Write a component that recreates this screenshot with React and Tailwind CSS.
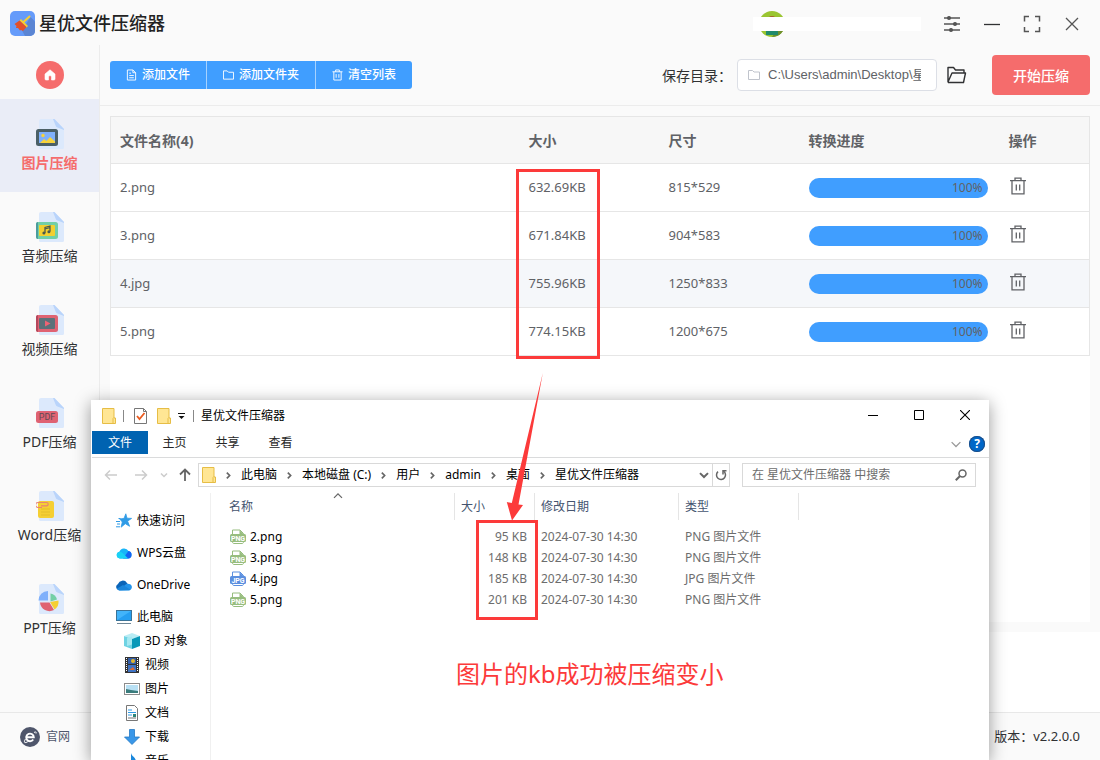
import React from "react";

const tools = [
  { label: "图片压缩", kind: "image" },
  { label: "音频压缩", kind: "audio" },
  { label: "视频压缩", kind: "video" },
  { label: "PDF压缩", kind: "pdf" },
  { label: "Word压缩", kind: "word" },
  { label: "PPT压缩", kind: "ppt" },
];

const files = [
  { name: "2.png", size: "632.69KB", dim: "815*529", progress: 100 },
  { name: "3.png", size: "671.84KB", dim: "904*583", progress: 100 },
  { name: "4.jpg", size: "755.96KB", dim: "1250*833", progress: 100 },
  { name: "5.png", size: "774.15KB", dim: "1200*675", progress: 100 },
];

const outputs = [
  { name: "2.png", size: "95 KB", type: "PNG 图片文件" },
  { name: "3.png", size: "148 KB", type: "PNG 图片文件" },
  { name: "4.jpg", size: "185 KB", type: "JPG 图片文件" },
  { name: "5.png", size: "201 KB", type: "PNG 图片文件" },
];

const crumbs = ["此电脑", "本地磁盘 (C:)", "用户", "admin", "桌面", "星优文件压缩器"];

function Logo() {
  return (
    <svg width="25" height="25" viewBox="0 0 25 25" aria-hidden="true">
      <rect width="25" height="25" rx="5" fill="#659bfa" />
      <path d="M20.500 6 25 10.500V20a5 5 0 0 1-5 5H15l-3-5.500z" fill="#5b85d3" />
      <path d="M19.500 5.500 13.500 11" stroke="#f5cf33" strokeWidth="2" strokeLinecap="round" />
      <path d="m11 8 7 7-1.500 1.500L9.500 9.500z" fill="#f5cf33" />
      <path d="M9.500 9.500 16.500 16 13 20l-2-1-1 .5-2-2.500-2 0 .5-2L4.500 13z" fill="#e2502b" />
    </svg>
  );
}

function ToolIcon({ kind }) {
  return (
    <svg width="28" height="30" viewBox="0 0 28 30" aria-hidden="true">
      <path d="M5 0h13L28 10v18.500a1.500 1.500 0 0 1-1.500 1.500h-22A1.500 1.500 0 0 1 3 28.500V2a2 2 0 0 1 2-2z" fill="#dce9fc" />
      <path d="M17 0h1.500L28 10v1l-6.500-2.500a3 3 0 0 1-2-2.200z" fill="#b9d4fb" />
      {kind === "image" && (
        <g>
          <rect x="0" y="10" width="22" height="17" rx="2.500" fill="#4b6067" />
          <rect x="3" y="13" width="16" height="11" fill="#7fb0fb" />
          <circle cx="7" cy="16.500" r="1.700" fill="#f7d33c" />
          <path d="m4 24 4-4 2.500 2 3.500-4 5 4.500V24z" fill="#f7d33c" />
        </g>
      )}
      {kind === "audio" && (
        <g>
          <rect x="0" y="10" width="22" height="17" rx="2.500" fill="#72cfa6" />
          <path d="M2 10v17a2 2 0 0 1-2-2V12a2 2 0 0 1 2-2z" fill="#4c9c9c" />
          <rect x="3" y="13" width="16" height="11" rx="1" fill="#f3cf2f" />
          <path d="M9 21v-5.500l5-1.500v5.500M9 17l5-1.500" stroke="#4b5a4d" strokeWidth="1.300" fill="none" />
          <circle cx="7.900" cy="21" r="1.500" fill="#4b5a4d" />
          <circle cx="12.900" cy="19.700" r="1.500" fill="#4b5a4d" />
        </g>
      )}
      {kind === "video" && (
        <g>
          <rect x="0" y="10" width="22" height="17" rx="2.500" fill="#df6272" />
          <path d="M2 10v17a2 2 0 0 1-2-2V12a2 2 0 0 1 2-2z" fill="#b5475c" />
          <rect x="3" y="13" width="16" height="11" rx="1" fill="#5b7079" />
          <path d="m9 15.500 5.500 3L9 21.500z" fill="#ee6374" />
        </g>
      )}
      {kind === "pdf" && (
        <g>
          <rect x="0" y="13" width="22" height="12" rx="2.500" fill="#df6272" />
          <text x="11" y="22.200" textAnchor="middle" fontSize="9" fontFamily="Roboto, sans-serif" fill="#5c4a52">PDF</text>
        </g>
      )}
      {kind === "word" && (
        <g>
          <rect x="2" y="10" width="16" height="17" rx="2" fill="#f5cf33" />
          <path d="M5 18h9M5 21h9M5 24h9" stroke="#e3bd2b" strokeWidth="1" />
          <path d="M6 16.500H2A2.300 2.300 0 0 1 2 11.500h8.500a1.600 1.600 0 0 1 0 3.300H5" fill="none" stroke="#e88372" strokeWidth="1.200" />
        </g>
      )}
      {kind === "ppt" && (
        <g>
          <path d="M12 7v9.500H2.500A9.500 9.500 0 0 1 12 7z" fill="#7fb0fb" />
          <path d="M14.500 9.500a8 8 0 0 1 6.500 6l-6.500 2z" fill="#72cfa6" />
          <path d="M22.500 16.500a9.500 9.500 0 0 1-4 9l-4.500-7.500z" fill="#f5cf33" />
          <path d="M4 18.500h9.500l4.500 7.500a9.500 9.500 0 0 1-14-7.500z" fill="#df6272" />
        </g>
      )}
    </svg>
  );
}

function TrashIcon() {
  return (
    <svg width="18" height="18" viewBox="0 0 18 18" fill="none" stroke="#606266" strokeWidth="1.300" aria-hidden="true">
      <path d="M1 3.600h16M6 3.400V1.100h6v2.300M3 3.600v13.300h12V3.600M7.300 7.500v6M10.700 7.500v6" />
    </svg>
  );
}

function Folder({ className = "" }) {
  return (
    <svg className={className} width="14" height="16" viewBox="0 0 14 16" aria-hidden="true">
      <path d="M.5.500h11.500v9.500h1.500v5.500H.5z" fill="#ffe694" stroke="#e6bd45" />
      <path d="M11 15.500v-5l1-1" fill="none" stroke="#e6bd45" />
    </svg>
  );
}

function FileIcon({ type }) {
  const color = type === "JPG" ? "#5b8fdf" : "#97bd7e";
  return (
    <svg width="16" height="16" viewBox="0 0 16 16" aria-hidden="true">
      <path d="M2.500 5V1h7.500l3.500 3.500V12.500c0 1.500-.5 2-1.500 2H4c-1 0-1.500-.5-1.500-2z" fill="#fff" stroke={color} />
      <path d="M9.500 1v4h4z" fill={color} />
      <rect x="0" y="5" width="16" height="8" rx="1.500" fill={color} />
      <text x="8" y="11.600" textAnchor="middle" fontSize="7" fontWeight="700" fontFamily="Roboto, sans-serif" fill="#fff">{type}</text>
    </svg>
  );
}

function Chevron({ className, d, size = 8, width = 1.5 }) {
  return (
    <svg className={className} width={size} height={size} viewBox="0 0 8 8" fill="none" stroke="currentColor" strokeWidth={width} aria-hidden="true">
      <path d={d} />
    </svg>
  );
}

function Sidebar() {
  return (
    <nav className="flex w-[100px] shrink-0 flex-col items-stretch border-r border-[#ececec] pt-4">
      <button aria-label="首页" className="mb-2.5 flex size-7 items-center justify-center self-center rounded-full bg-[#f56c6c]">
        <svg width="12" height="12" viewBox="0 0 12 12" aria-hidden="true">
          <path d="M6 .8 11 5v5a1 1 0 0 1-1 1H7.500V8a1.500 1.500 0 0 0-3 0v3H2a1 1 0 0 1-1-1V5z" fill="#fff" stroke="#fff" strokeWidth=".6" strokeLinejoin="round" />
        </svg>
      </button>
      {tools.map((t, i) => (
        <button
          key={t.label}
          className={
            "flex h-[93px] flex-col items-center gap-1 pt-5 text-[14px] leading-5 " +
            (i === 0 ? "bg-[#eaedf7] font-bold text-[#f56c6c]" : "text-[#303133]")
          }
        >
          <ToolIcon kind={t.kind} />
          {t.label}
        </button>
      ))}
    </nav>
  );
}

function TitleBar() {
  return (
    <header className="flex h-[45px] shrink-0 items-center pt-0.5 pl-2.5 pr-[19px]">
      <Logo />
      <h1 className="ml-1 text-[18px] font-medium text-[#222]">星优文件压缩器</h1>
      <div className="relative ml-auto flex h-[26px] w-[168px] items-center">
        <svg className="ml-1.5" width="26" height="26" viewBox="0 0 26 26" aria-hidden="true">
          <clipPath id="avatar"><circle cx="13" cy="13" r="13" /></clipPath>
          <g clipPath="url(#avatar)">
            <rect width="26" height="26" fill="#9ac531" />
            <path d="M19 17 26 21v5H13z" fill="#6f8f2d" />
            <circle cx="13" cy="10" r="5" fill="#a8602c" />
            <path d="M7 20h12v4H7z" fill="#208a6a" />
          </g>
        </svg>
        <div className="absolute inset-x-0 top-1.5 h-3.5 bg-white" />
      </div>
      <div className="ml-[22px] flex items-center gap-[22px] text-[#555]">
        <button aria-label="设置">
          <svg width="18" height="18" viewBox="0 0 18 18" stroke="currentColor" strokeWidth="1.300" fill="currentColor" aria-hidden="true">
            <path d="M1 3h16M1 9h16M1 15h16" />
            <circle cx="6" cy="3" r="1.400" /><circle cx="12" cy="9" r="1.400" /><circle cx="8" cy="15" r="1.400" />
          </svg>
        </button>
        <button aria-label="最小化">
          <svg width="18" height="18" viewBox="0 0 18 18" stroke="#303133" strokeWidth="1.300" aria-hidden="true"><path d="M1 9.500h16" /></svg>
        </button>
        <button aria-label="全屏">
          <svg width="18" height="18" viewBox="0 0 18 18" stroke="currentColor" strokeWidth="1.500" fill="none" aria-hidden="true">
            <path d="M1.500 6.500V1.500h4.500M12 1.500h4.500v5M16.500 12v4.500H12M6 16.500H1.500V12" />
          </svg>
        </button>
        <button aria-label="关闭">
          <svg width="18" height="18" viewBox="0 0 18 18" stroke="currentColor" strokeWidth="1.300" aria-hidden="true"><path d="m3 3 12 12M15 3 3 15" /></svg>
        </button>
      </div>
    </header>
  );
}

function Toolbar() {
  const btn = "flex h-7 items-center gap-[5px] px-4 text-[12px] font-medium text-white";
  return (
    <div className="flex h-[61px] shrink-0 items-center border-b border-[#ececec] px-2.5">
      <div className="flex divide-x divide-[#a6d2ff] rounded-[3px] bg-[#409eff]">
        <button className={btn}>
          <svg width="11" height="12" viewBox="0 0 12 12" fill="none" stroke="currentColor" aria-hidden="true">
            <path d="M1.500.500h6l3 3v8h-9zM7.500.500v3h3M3.500 4h2M3.500 6.500h5M3.500 9h5" />
          </svg>
          添加文件
        </button>
        <button className={btn}>
          <svg width="11" height="12" viewBox="0 0 12 12" fill="none" stroke="currentColor" aria-hidden="true">
            <path d="M.5 1.500h4l1.500 1.500h5.500v7.500H.500z" />
          </svg>
          添加文件夹
        </button>
        <button className={btn}>
          <svg width="11" height="12" viewBox="0 0 12 12" fill="none" stroke="currentColor" aria-hidden="true">
            <path d="M.5 2.500h11M4 2.500v-2h4v2M2 2.500v9h8v-9M4.500 5v4M7.500 5v4" />
          </svg>
          清空列表
        </button>
      </div>
      <label htmlFor="outdir" className="ml-auto text-[14px] text-[#303133]">保存目录：</label>
      <div className="ml-[5px] flex h-8 w-[200px] items-center gap-2 rounded border border-[#dcdfe6] bg-white pr-[15px] pl-2.5">
        <svg className="shrink-0" width="12" height="12" viewBox="0 0 12 12" fill="none" stroke="#c0c4cc" aria-hidden="true">
          <path d="M.5 1.500h4l1.500 1.500h5.500v7.500H.500z" />
        </svg>
        <input
          id="outdir"
          className="w-full min-w-0 bg-transparent font-['Liberation_Sans','Noto_Sans_CJK_SC',sans-serif] text-[13px] text-[#606266] outline-none"
          defaultValue="C:\Users\admin\Desktop\星优文件压缩器"
        />
      </div>
      <button aria-label="打开目录" className="ml-2.5">
        <svg width="20" height="18" viewBox="0 0 20 18" fill="none" stroke="#303133" strokeWidth="1.400" strokeLinejoin="round" aria-hidden="true">
          <path d="M1 16.500V1.500h5.500l2 2.500H17v3M1 16.500h15.500L18.500 7H5L1 16" />
        </svg>
      </button>
      <button className="ml-[25px] h-10 w-[98px] rounded bg-[#f56c6c] text-[14px] font-medium text-white">开始压缩</button>
    </div>
  );
}

function FileTable() {
  return (
    <table className="w-full table-fixed border-collapse border border-[#e6e6e6] text-left text-[#606266]">
      <colgroup>
        <col /><col className="w-[140px]" /><col className="w-[140px]" /><col className="w-[200px]" /><col className="w-[90px]" />
      </colgroup>
      <thead>
        <tr className="h-[47px] border-b border-[#e6e6e6] bg-[#f7f7f7] text-[14px]">
          {["文件名称(4)", "大小", "尺寸", "转换进度", "操作"].map((h) => (
            <th key={h} className="px-[9px] font-bold">{h}</th>
          ))}
        </tr>
      </thead>
      <tbody className="text-[13px]">
        {files.map((f, i) => (
          <tr key={f.name} className={"h-12 border-b border-[#e6e6e6] " + (i === 2 ? "bg-[#f5f7fa]" : "bg-white")}>
            <td className="px-[9px]">{f.name}</td>
            <td className="px-[9px]">{f.size}</td>
            <td className="px-[9px]">{f.dim}</td>
            <td className="pr-3 pl-[9px]">
              <div role="progressbar" aria-valuenow={f.progress} className="rounded-full bg-[#ebeef5]">
                <div className="h-5 rounded-full bg-[#409eff] pr-[5px] text-right text-[12px] leading-5" style={{ width: `${f.progress}%` }}>
                  {f.progress}%
                </div>
              </div>
            </td>
            <td className="px-[9px]">
              <button aria-label={`删除 ${f.name}`} className="mb-1 block"><TrashIcon /></button>
            </td>
          </tr>
        ))}
      </tbody>
    </table>
  );
}

function NavIcon({ kind }) {
  return (
    <svg className="shrink-0" width="16" height="16" viewBox="0 0 16 16" aria-hidden="true">
      {kind === "star" && (
        <g>
          <path d="m9.800.8 1.200 4.400 4.600.2-4 2.700 2 5.200-4.300-2.600-4.200 3.500 1.200-5.200L3.800 6l4.200-.6z" fill="#2f9be6" stroke="#2f9be6" strokeWidth=".8" />
          <path d="M0 8.500h4M1 11h3M2.500 5.500h2M0 13.800h4" stroke="#2f9be6" />
        </g>
      )}
      {kind === "wps" && (
        <g>
          <path d="M3.800 13.500a3.400 3.400 0 0 1-.4-6.700A5 5 0 0 1 12.500 6a3.800 3.800 0 0 1-.3 7.500z" fill="#18b5f8" />
          <path d="M12.500 6a3.800 3.800 0 0 1-.3 7.500H7L11 8z" fill="#1463f3" />
          <path d="M3.800 13.500a3.400 3.400 0 0 1-.4-6.700c3 0 4.600 3 8.800 6.700z" fill="#19d2f5" />
        </g>
      )}
      {kind === "onedrive" && (
        <g>
          <path d="M2.500 13A3.200 3.200 0 0 1 2 7a5 5 0 0 1 9-1l2 3z" fill="#0a64b8" />
          <path d="M3 13.500 9 8a4 4 0 0 1 4-1 3.300 3.300 0 0 1 .3 6.500z" fill="#2293ea" />
          <path d="M1 11.500 7 8l8 5-12 .5A3 3 0 0 1 1 11.500z" fill="#1a85da" />
        </g>
      )}
      {kind === "pc" && (
        <g>
          <rect x=".5" y="1.500" width="15" height="10" fill="#42b4fa" stroke="#3a7398" />
          <path d="M1 11 15 2v9z" fill="#269ff1" />
          <path d="M1 14.500h14" stroke="#6e8797" />
        </g>
      )}
      {kind === "cube" && (
        <g>
          <path d="m8 0 8 3-8 3-8-3z" fill="#b9ecf4" />
          <path d="M0 3l8 3v10l-8-3z" fill="#6fd3e3" />
          <path d="m16 3-8 3v10l8-3z" fill="#0798b8" />
          <path d="m3 5 5-1.500v8L3 13z" fill="#a5e8f1" />
        </g>
      )}
      {kind === "film" && (
        <g>
          <rect x="1" y="0" width="14" height="16" fill="#333" />
          <path d="M4 1h8v6H4z" fill="#345fa8" /><path d="M4 8h8v7H4z" fill="#3e73c4" />
          <circle cx="9" cy="4" r="2" fill="#e3b72d" /><path d="m5 13 4-3 2 3z" fill="#d86b36" />
          <path d="M2.500 1v14M13.500 1v14" stroke="#fff" strokeWidth="1" strokeDasharray="1 1" />
        </g>
      )}
      {kind === "photo" && (
        <g>
          <rect x=".5" y="2.500" width="15" height="11" fill="#fff" stroke="#8c8c8c" />
          <path d="M2 4h12v8H2z" fill="#b8e0f4" /><path d="m2 8 5 1 7 1v2H2z" fill="#3a7c7c" />
        </g>
      )}
      {kind === "doc" && (
        <g>
          <path d="M2.500.500h8l3 3v12h-11z" fill="#fff" stroke="#777" />
          <path d="M4 5h4M4 7.500h8M4 10h4" stroke="#2f9be6" /><path d="M4 13h8" stroke="#777" /><path d="M9 9h3v3H9z" fill="#2d8578" />
        </g>
      )}
      {kind === "down" && <path d="M5.500.500h5v7.500h5L8 15.500.500 8h5z" fill="#3a97e8" stroke="#2578c4" strokeWidth=".8" />}
      {kind === "music" && <path d="M7 0c1 4 5 4 5 9l-2-1v5a3 3 0 1 1-3-2z" fill="#1a87dc" />}
    </svg>
  );
}

function ExplorerNav() {
  const top = [["star", "快速访问"], ["wps", "WPS云盘"], ["onedrive", "OneDrive"]];
  const sub = [["cube", "3D 对象"], ["film", "视频"], ["photo", "图片"], ["doc", "文档"], ["down", "下载"], ["music", "音乐"]];
  return (
    <ul className="w-[119px] shrink-0 border-r border-[#f0f0f0] pt-3 text-[12px] whitespace-nowrap text-black">
      {top.map(([k, label]) => (
        <li key={k} className="flex h-8 items-center gap-[5px] pl-6"><NavIcon kind={k} />{label}</li>
      ))}
      <li className="mt-1 flex h-6 items-center gap-[5px] pl-6"><NavIcon kind="pc" />此电脑</li>
      {sub.map(([k, label]) => (
        <li key={k} className="flex h-6 items-center gap-[5px] pl-8"><NavIcon kind={k} />{label}</li>
      ))}
    </ul>
  );
}

function Explorer() {
  return (
    <section className="absolute top-[400px] bottom-0 left-[91px] flex w-[898px] flex-col overflow-hidden bg-white pl-px text-[12px] text-black">
      <div className="flex h-[31px] shrink-0 items-center pl-2.5">
        <Folder />
        <span className="ml-[7px] h-3 w-px bg-[#888]" />
        <svg className="ml-2.5" width="14" height="16" viewBox="0 0 14 16" fill="none" aria-hidden="true">
          <path d="M.5.500h9l3 3v12H.500z" fill="#fff" stroke="#777" /><path d="M9.500.500v3h3" stroke="#777" />
          <path d="m3 8 2.500 3 5-6" stroke="#ea5a1e" strokeWidth="1.800" />
        </svg>
        <Folder className="ml-[9px]" />
        <svg className="ml-1.5" width="9" height="8" viewBox="0 0 9 8" aria-hidden="true">
          <path d="M1 1.500h7" stroke="#111" /><path d="M1.500 4h6l-3 3z" fill="#111" />
        </svg>
        <span className="ml-[7px] h-3 w-px bg-[#888]" />
        <h2 className="ml-[7px]">星优文件压缩器</h2>
        <div className="ml-auto flex pr-px pb-px">
          <button aria-label="窗口最小化" className="flex w-[46px] justify-center">
            <svg width="10" height="10" viewBox="0 0 10 10" stroke="#000" aria-hidden="true"><path d="M0 5.500h10" /></svg>
          </button>
          <button aria-label="窗口最大化" className="flex w-[46px] justify-center">
            <svg width="10" height="10" viewBox="0 0 10 10" fill="none" stroke="#000" aria-hidden="true"><path d="M.5.500h9v9h-9z" /></svg>
          </button>
          <button aria-label="关闭窗口" className="flex w-[46px] justify-center">
            <svg width="10" height="10" viewBox="0 0 10 10" stroke="#000" strokeWidth="1.100" aria-hidden="true"><path d="m0 0 10 10M10 0 0 10" /></svg>
          </button>
        </div>
      </div>

      <div className="flex h-[27px] shrink-0 items-start border-b border-[#dadbdc]">
        <button className="h-[23px] w-14 bg-[#0063b1] text-white">文件</button>
        {["主页", "共享", "查看"].map((t) => (
          <button key={t} className="h-6 w-[53px] text-[#262626]">{t}</button>
        ))}
        <div className="ml-auto flex h-[25px] items-center gap-2 pr-1">
          <Chevron className="text-[#999]" size={10} width={1} d="M.5 2.500 4 6l3.500-3.500" />
          <button aria-label="帮助" className="flex size-4 items-center justify-center rounded-full bg-[#0067c8] text-[12px] leading-4 font-bold text-white ring-1 ring-[#1d4e87] ring-inset">?</button>
        </div>
      </div>

      <div className="flex h-[34px] shrink-0 items-center pl-3 pr-[13px]">
        <svg width="14" height="14" viewBox="0 0 14 14" fill="none" stroke="#ccc" strokeWidth="1.500" aria-hidden="true"><path d="M13 7H1.500M6 2.500 1.500 7 6 11.500" /></svg>
        <svg className="ml-4" width="14" height="14" viewBox="0 0 14 14" fill="none" stroke="#ccc" strokeWidth="1.500" aria-hidden="true"><path d="M1 7h11.500M8 2.500 12.500 7 8 11.500" /></svg>
        <Chevron className="ml-3 text-[#ccc]" d="M1 2.500 4 5.500l3-3" />
        <svg className="ml-2.5" width="14" height="14" viewBox="0 0 14 14" fill="none" stroke="#666" strokeWidth="1.800" aria-hidden="true"><path d="M7 13V2M2 6.500l5-5 5 5" /></svg>
        <div className="ml-1.5 flex h-6 min-w-0 flex-1 items-center border border-[#d9d9d9] pl-[3px]">
          <Folder />
          {crumbs.map((c) => (
            <React.Fragment key={c}>
              <Chevron className="mx-2 shrink-0 text-[#666]" size={9} d="M2.500 1.500 5 4 2.500 6.500" />
              <span className="whitespace-nowrap">{c}</span>
            </React.Fragment>
          ))}
          <Chevron className="ml-auto mr-[3px] shrink-0 text-[#666]" size={10} width={1.6} d="M.8 2.500 4 5.600l3.200-3.100" />
          <button aria-label="刷新" className="flex h-full w-[17px] items-center justify-center border-l border-[#d9d9d9]">
            <svg width="12" height="12" viewBox="0 0 12 12" fill="none" stroke="#666" strokeWidth="1.500" aria-hidden="true">
              <path d="M8.500 2.200A4.500 4.500 0 1 1 3 2.600" /><path d="M8 5.500V1.700h3.500" />
            </svg>
          </button>
        </div>
        <div className="ml-3 flex h-6 w-[234px] items-center border border-[#d9d9d9] pl-[9px] pr-2">
          <input aria-label="搜索" placeholder="在 星优文件压缩器 中搜索" className="min-w-0 flex-1 bg-transparent outline-none placeholder:text-[#6d6d6d]" />
          <svg width="12" height="12" viewBox="0 0 12 12" fill="none" stroke="#666" strokeWidth="1.500" aria-hidden="true">
            <circle cx="7.500" cy="4.500" r="3.500" /><path d="M5 7 .8 11.200" strokeWidth="2" />
          </svg>
        </div>
      </div>

      <div className="flex min-h-0 flex-1 pt-px">
        <ExplorerNav />
        <div className="min-w-0 flex-1">
          <table className="w-[588px] table-fixed border-separate border-spacing-0 text-left text-[#6d6d6d]">
            <colgroup>
              <col className="w-[244px]" /><col className="w-20" /><col className="w-36" /><col className="w-[120px]" />
            </colgroup>
            <thead>
              <tr className="h-[27px] text-[#44546f]">
                <th className="relative border-r border-[#e5e5e5] pl-[18px] font-normal">
                  名称
                  <Chevron className="absolute -top-0.5 left-1/2 text-[#666]" size={10} width={1} d="M.8 5.500 4 2.300l3.200 3.200" />
                </th>
                {["大小", "修改日期", "类型"].map((h) => (
                  <th key={h} className="border-r border-[#e5e5e5] pl-1.5 font-normal">{h}</th>
                ))}
              </tr>
            </thead>
            <tbody className="before:block before:h-1.5 before:content-['']">
              {outputs.map((o) => (
                <tr key={o.name} className="h-[21px]">
                  <td className="pl-[19px] text-black">
                    <span className="flex items-center gap-1"><FileIcon type={o.type.slice(0, 3)} />{o.name}</span>
                  </td>
                  <td className="pr-2 text-right">{o.size}</td>
                  <td className="pl-1.5">2024-07-30 14:30</td>
                  <td className="pl-1.5">{o.type}</td>
                </tr>
              ))}
            </tbody>
          </table>
        </div>
      </div>
    </section>
  );
}

function Annotations() {
  return (
    <div className="pointer-events-none absolute inset-0 text-[#fc3a3a]">
      <div className="absolute top-[169px] left-[516px] h-[190px] w-[84px] border-3 border-current" />
      <div className="absolute top-[520px] left-[476px] h-[100px] w-[62px] border-3 border-current" />
      <svg className="absolute top-[373px] left-[506px]" width="38" height="148" viewBox="0 0 38 148" aria-hidden="true">
        <path d="M36.800 0 5.800 130 .8 129 6 147.500 17 132l-4.500-.5z" fill="currentColor" />
      </svg>
      <p className="absolute top-[656px] left-[456px] text-[24px] leading-9 whitespace-nowrap">图片的kb成功被压缩变小</p>
    </div>
  );
}

export default function App() {
  return (
    <div className="relative flex h-screen flex-col overflow-hidden bg-[#fafafa] font-['Noto_Sans','Noto_Sans_CJK_SC',sans-serif]">
      <TitleBar />
      <div className="flex min-h-0 flex-1">
        <Sidebar />
        <main className="flex min-w-0 flex-1 flex-col">
          <Toolbar />
          <div className="m-2.5 min-h-0 flex-1 bg-white">
            <FileTable />
          </div>
          <div className="h-20 shrink-0 bg-white" />
        </main>
      </div>
      <footer className="flex h-12 shrink-0 items-center justify-between border-t border-[#e8e8e8] px-5">
        <a href="#site" className="flex items-center gap-1.5 text-[12px] text-[#4f566b]">
          <svg width="20" height="20" viewBox="0 0 20 20" aria-hidden="true">
            <circle cx="10" cy="10" r="10" fill="#4f566b" />
            <path d="M6.500 10.300h7.300a3.800 3.800 0 1 0-.6 2.200" fill="none" stroke="#fff" strokeWidth="1.900" />
            <path d="M14 5.500c1.500-1 2.500-.8 2 1M5.500 12c-1.500 2.500-1.500 4 .5 3.500 1-.2 2-1 2.500-1.500" fill="none" stroke="#fff" strokeWidth="1" />
          </svg>
          官网
        </a>
        <span className="text-[13px] text-[#303133]">版本：v2.2.0.0</span>
      </footer>
      <div className="absolute top-[400px] bottom-0 left-[91px] w-[898px] shadow-[0_3px_16px_rgba(0,0,0,0.4)]" />
      <Explorer />
      <Annotations />
    </div>
  );
}
